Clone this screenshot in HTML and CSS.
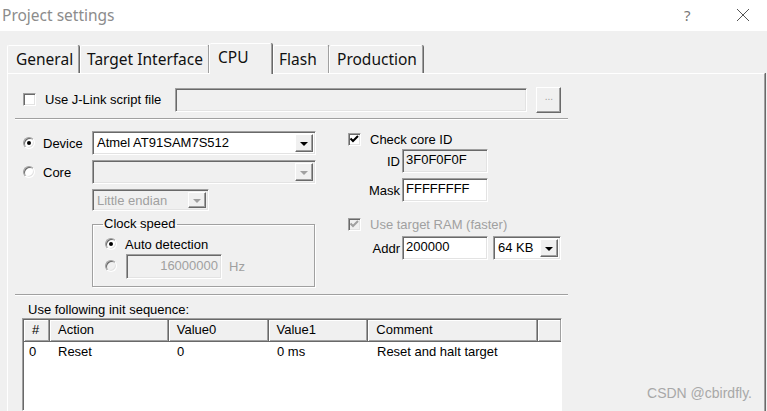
FILE: index.html
```html
<!DOCTYPE html>
<html>
<head>
<meta charset="utf-8">
<link rel="stylesheet" href="styles.css">
</head>
<body>
<div class="window">
  <div class="titlebar">
    <span class="title">Project settings</span>
    <span class="help">?</span>
    <svg class="close" width="14" height="14" viewBox="0 0 14 14"><path d="M1 1 L13 13 M13 1 L1 13" stroke="#555" stroke-width="1" fill="none"/></svg>
  </div>
  <div class="tabs">
    <div class="tab t1">General</div>
    <div class="tab t2">Target Interface</div>
    <div class="tab t3 sel">CPU</div>
    <div class="tab t4">Flash</div>
    <div class="tab t5">Production</div>
  </div>
  <div class="panel">
    <div class="row-script">
      <span class="check"></span>
      <span class="lbl script-lbl">Use J-Link script file</span>
      <div class="field dis script-field"></div>
      <div class="btn dots">...</div>
    </div>
    <div class="sep"></div>
    <div class="mid">
      <div class="left">
        <div class="lrow">
          <span class="radio on"></span><span class="lbl rlbl">Device</span>
          <div class="combo w223"><span class="ctext">Atmel AT91SAM7S512</span><span class="cbtn"><i class="tri"></i></span></div>
        </div>
        <div class="lrow r2">
          <span class="radio"></span><span class="lbl rlbl">Core</span>
          <div class="combo w223 dis"><span class="ctext"></span><span class="cbtn"><i class="tri gray"></i></span></div>
        </div>
        <div class="lrow r3">
          <div class="combo w116 dis"><span class="ctext graytxt">Little endian</span><span class="cbtn"><i class="tri gray"></i></span></div>
        </div>
        <fieldset class="group">
          <legend>Clock speed</legend>
          <div class="grow">
            <span class="radio on"></span><span class="lbl">Auto detection</span>
          </div>
          <div class="grow g2">
            <span class="radio dis"></span>
            <div class="field dis hz">16000000</div>
            <span class="lbl graytxt">Hz</span>
          </div>
        </fieldset>
      </div>
      <div class="right">
        <div class="rrow">
          <span class="check checked"><svg width="11" height="11" viewBox="0 0 11 11"><path d="M1.5 4.5 L4 7 L9 2" stroke="#000" stroke-width="2" fill="none"/></svg></span>
          <span class="lbl">Check core ID</span>
        </div>
        <div class="frow f1">
          <span class="flbl">ID</span><div class="field dis f86">3F0F0F0F</div>
        </div>
        <div class="frow f2">
          <span class="flbl">Mask</span><div class="field f86">FFFFFFFF</div>
        </div>
        <div class="rrow r4">
          <span class="check checked dis"><svg width="11" height="11" viewBox="0 0 11 11"><path d="M1.5 4.5 L4 7 L9 2" stroke="#a0a0a0" stroke-width="2" fill="none"/></svg></span>
          <span class="lbl graytxt">Use target RAM (faster)</span>
        </div>
        <div class="frow f3">
          <span class="flbl">Addr</span><div class="field f86">200000</div>
          <div class="combo w67"><span class="ctext">64 KB</span><span class="cbtn"><i class="tri"></i></span></div>
        </div>
      </div>
    </div>
    <div class="sep"></div>
    <div class="init">
      <div class="lbl initlbl">Use following init sequence:</div>
      <div class="list">
        <div class="lhead">
          <div class="hc c0">#</div>
          <div class="hc c1">Action</div>
          <div class="hc c2">Value0</div>
          <div class="hc c3">Value1</div>
          <div class="hc c4">Comment</div>
          <div class="hc c5"></div>
        </div>
        <div class="lrowdata">
          <div class="dc c0">0</div>
          <div class="dc c1">Reset</div>
          <div class="dc c2">0</div>
          <div class="dc c3">0 ms</div>
          <div class="dc c4">Reset and halt target</div>
        </div>
      </div>
    </div>
  </div>
  <div class="watermark">CSDN @cbirdfly.</div>
</div>
</body>
</html>
```
FILE: styles.css
```css
* { box-sizing: border-box; }
html, body { margin: 0; padding: 0; }
body {
  width: 767px; height: 411px; overflow: hidden;
  background: #f0f0f0;
  font-family: "Liberation Sans", Arial, sans-serif;
  font-size: 13px; color: #000;
}
.window { position: relative; width: 767px; height: 411px; display: flex; flex-direction: column; }

.titlebar {
  height: 31px; background: #fff; display: flex; align-items: center;
  padding-left: 2px; flex: none;
}
.title { font-family: "Noto Sans", sans-serif; font-size: 15.5px; color: #8c8c8c; flex: 1; margin-top: -1px; }
.help { font-family: "Noto Sans", sans-serif; font-size: 15px; color: #777; width: 52px; margin-top: -2px; }
.close { margin-right: 17px; margin-top: -1px; }

.tabs {
  height: 42px; flex: none; display: flex; align-items: flex-end;
  padding-left: 7px;
  font-family: "Noto Sans", sans-serif; font-size: 15.5px; color: #111;
}
.tab {
  height: 28px; line-height: 26px; padding: 0 0 0 8px; white-space: nowrap;
  border-top: 1px solid #fff; border-left: 1px solid #fff;
  border-right: 1px solid #a0a0a0; box-shadow: 1px 0 #696969;
  border-radius: 2px 2px 0 0;
  background: #f0f0f0;
}
.t1 { width: 72px; margin-right: 1px; }
.t2 { width: 129px; padding-left: 6px; }
.t3 { width: 63px; padding-left: 8px; }
.t4 { width: 56px; margin-left: 1px; padding-left: 5px; }
.t5 { width: 94px; padding-left: 7px; }
.tab.sel {
  height: 31px; margin-bottom: -1px; line-height: 26px;
  position: relative; z-index: 2;
}

.panel {
  flex: 1; margin-left: 7px; margin-right: 2px;
  border-top: 1px solid #fff; border-left: 1px solid #fff;
  border-right: 1px solid #a0a0a0; box-shadow: 1px 0 #696969;
  display: flex; flex-direction: column;
}

.lbl { white-space: nowrap; }
.graytxt { color: #a0a0a0; }

.check {
  width: 13px; height: 13px; flex: none; background: #fff;
  border: 1px solid; border-color: #a0a0a0 #fff #fff #a0a0a0;
  box-shadow: inset 1px 1px #696969, inset -1px -1px #e3e3e3;
  display: inline-flex; align-items: center; justify-content: center;
}
.check.dis { background: #f0f0f0; }

.radio {
  width: 12px; height: 12px; border-radius: 50%; flex: none; background: #fff;
  border: 1px solid; border-color: #a0a0a0 #fff #fff #a0a0a0;
  box-shadow: inset 1px 1px #696969, inset -1px -1px #e3e3e3;
  position: relative;
}
.radio.on::after {
  content: ""; position: absolute; left: 3px; top: 3px; width: 4px; height: 4px;
  border-radius: 50%; background: #000;
}
.radio.dis { background: #f0f0f0; }

.field {
  height: 24px; background: #fff; padding: 0 3px; line-height: 20px;
  border: 1px solid; border-color: #a0a0a0 #fff #fff #a0a0a0;
  box-shadow: inset 1px 1px #696969, inset -1px -1px #e3e3e3;
  white-space: nowrap;
}
.field.dis { background: #f0f0f0; }

.btn {
  background: #f0f0f0; border: 1px solid; border-color: #fff #696969 #696969 #fff;
  box-shadow: inset -1px -1px #a0a0a0;
}

.row-script { display: flex; align-items: center; margin-top: 13px; padding-left: 15px; height: 25px; }
.script-lbl { margin-left: 9px; }
.script-field { width: 352px; margin-left: 14px; }
.dots { width: 25px; height: 26px; margin-left: 9px; color: #a0a0a0; font-size: 10px; text-align: center; line-height: 18px; }

.sep { height: 2px; margin-left: 7px; width: 553px; border-top: 1px solid #a0a0a0; border-bottom: 1px solid #fff; flex: none; }
.row-script + .sep { margin-top: 6px; }

.mid { display: flex; height: 174px; flex: none; }
.left { width: 340px; padding-left: 15px; padding-top: 11px; }
.lrow { display: flex; align-items: center; height: 24px; }
.lrow.r2 { margin-top: 5px; }
.lrow.r3 { margin-top: 5px; padding-left: 69px; height: 22px; }
.rlbl { margin-left: 8px; width: 49px; }

.combo {
  height: 24px; display: flex; background: #fff;
  border: 1px solid; border-color: #a0a0a0 #fff #fff #a0a0a0;
  box-shadow: inset 1px 1px #696969, inset -1px -1px #e3e3e3;
  padding: 2px;
}
.combo.dis { background: #f0f0f0; }
.w223 { width: 224px; }
.w116 { width: 117px; height: 22px; }
.w67 { width: 68px; margin-left: 5px; }
.ctext { flex: 1; padding-left: 2px; line-height: 18px; white-space: nowrap; }
.cbtn {
  width: 18px; background: #f0f0f0; display: flex; align-items: center; justify-content: center;
  border: 1px solid; border-color: #fff #696969 #696969 #fff;
  box-shadow: inset -1px -1px #a0a0a0;
}
.tri { width: 0; height: 0; border-left: 4px solid transparent; border-right: 4px solid transparent; border-top: 4px solid #000; margin-top: 1px; }
.tri.gray { border-top-color: #a0a0a0; }

.group {
  margin: 6px 0 0 69px; width: 223px; height: 70px; padding: 0 0 0 12px;
  border: 1px solid #a0a0a0; box-shadow: 1px 1px #fff, inset 1px 1px #fff;
}
.group legend { padding: 0 1px; margin-left: -2px; line-height: 14px; }
.grow { display: flex; align-items: center; height: 18px; margin-top: 4px; }
.grow .lbl { margin-left: 8px; }
.grow.g2 { height: 26px; margin-top: 0; }
.hz { width: 96px; margin-left: 9px; text-align: right; color: #a0a0a0; height: 25px; line-height: 21px; }
.grow.g2 .lbl { margin-left: 7px; }

.right { padding-top: 11px; }
.rrow { display: flex; align-items: center; height: 16px; }
.rrow .lbl { margin-left: 9px; }
.rrow.r4 { margin-top: 14px; }
.frow { display: flex; align-items: center; height: 24px; }
.frow.f1 { margin-top: 2px; }
.frow.f2 { margin-top: 5px; }
.frow.f3 { margin-top: 4px; }
.flbl { width: 54px; text-align: right; padding-right: 2px; }
.f86 { width: 86px; }

.init { padding-left: 14px; flex: 1; display: flex; flex-direction: column; }
.initlbl { margin-left: 6px; height: 22px; line-height: 14px; padding-top: 7px; }
.list {
  flex: 1; width: 540px; background: #fff;
  border: 1px solid; border-color: #a0a0a0 #fff #fff #a0a0a0;
  box-shadow: inset 1px 1px #696969;
  padding: 1px 0 0 1px;
}
.lhead { display: flex; height: 22px; background: #f0f0f0; }
.hc {
  height: 22px; line-height: 20px; padding-left: 8px;
  border-right: 1px solid #696969; box-shadow: inset -1px 0 #a0a0a0, inset 1px 1px #fff, inset 0 -1px #a0a0a0;
  border-bottom: 1px solid #696969;
}
.c0 { width: 26px; padding-left: 8px; }
.c1 { width: 119px; }
.c2 { width: 100px; }
.c3 { width: 100px; }
.c4 { width: 170px; }
.c5 { width: 23px; border-right: none; }
.lrowdata { display: flex; height: 22px; margin-top: 1px; }
.dc { line-height: 18px; padding-left: 8px; white-space: nowrap; }
.dc.c0 { padding-left: 5px; }

.watermark {
  position: absolute; right: 15px; bottom: 10px;
  font-size: 14px; color: #a8a8a8;
}
```
